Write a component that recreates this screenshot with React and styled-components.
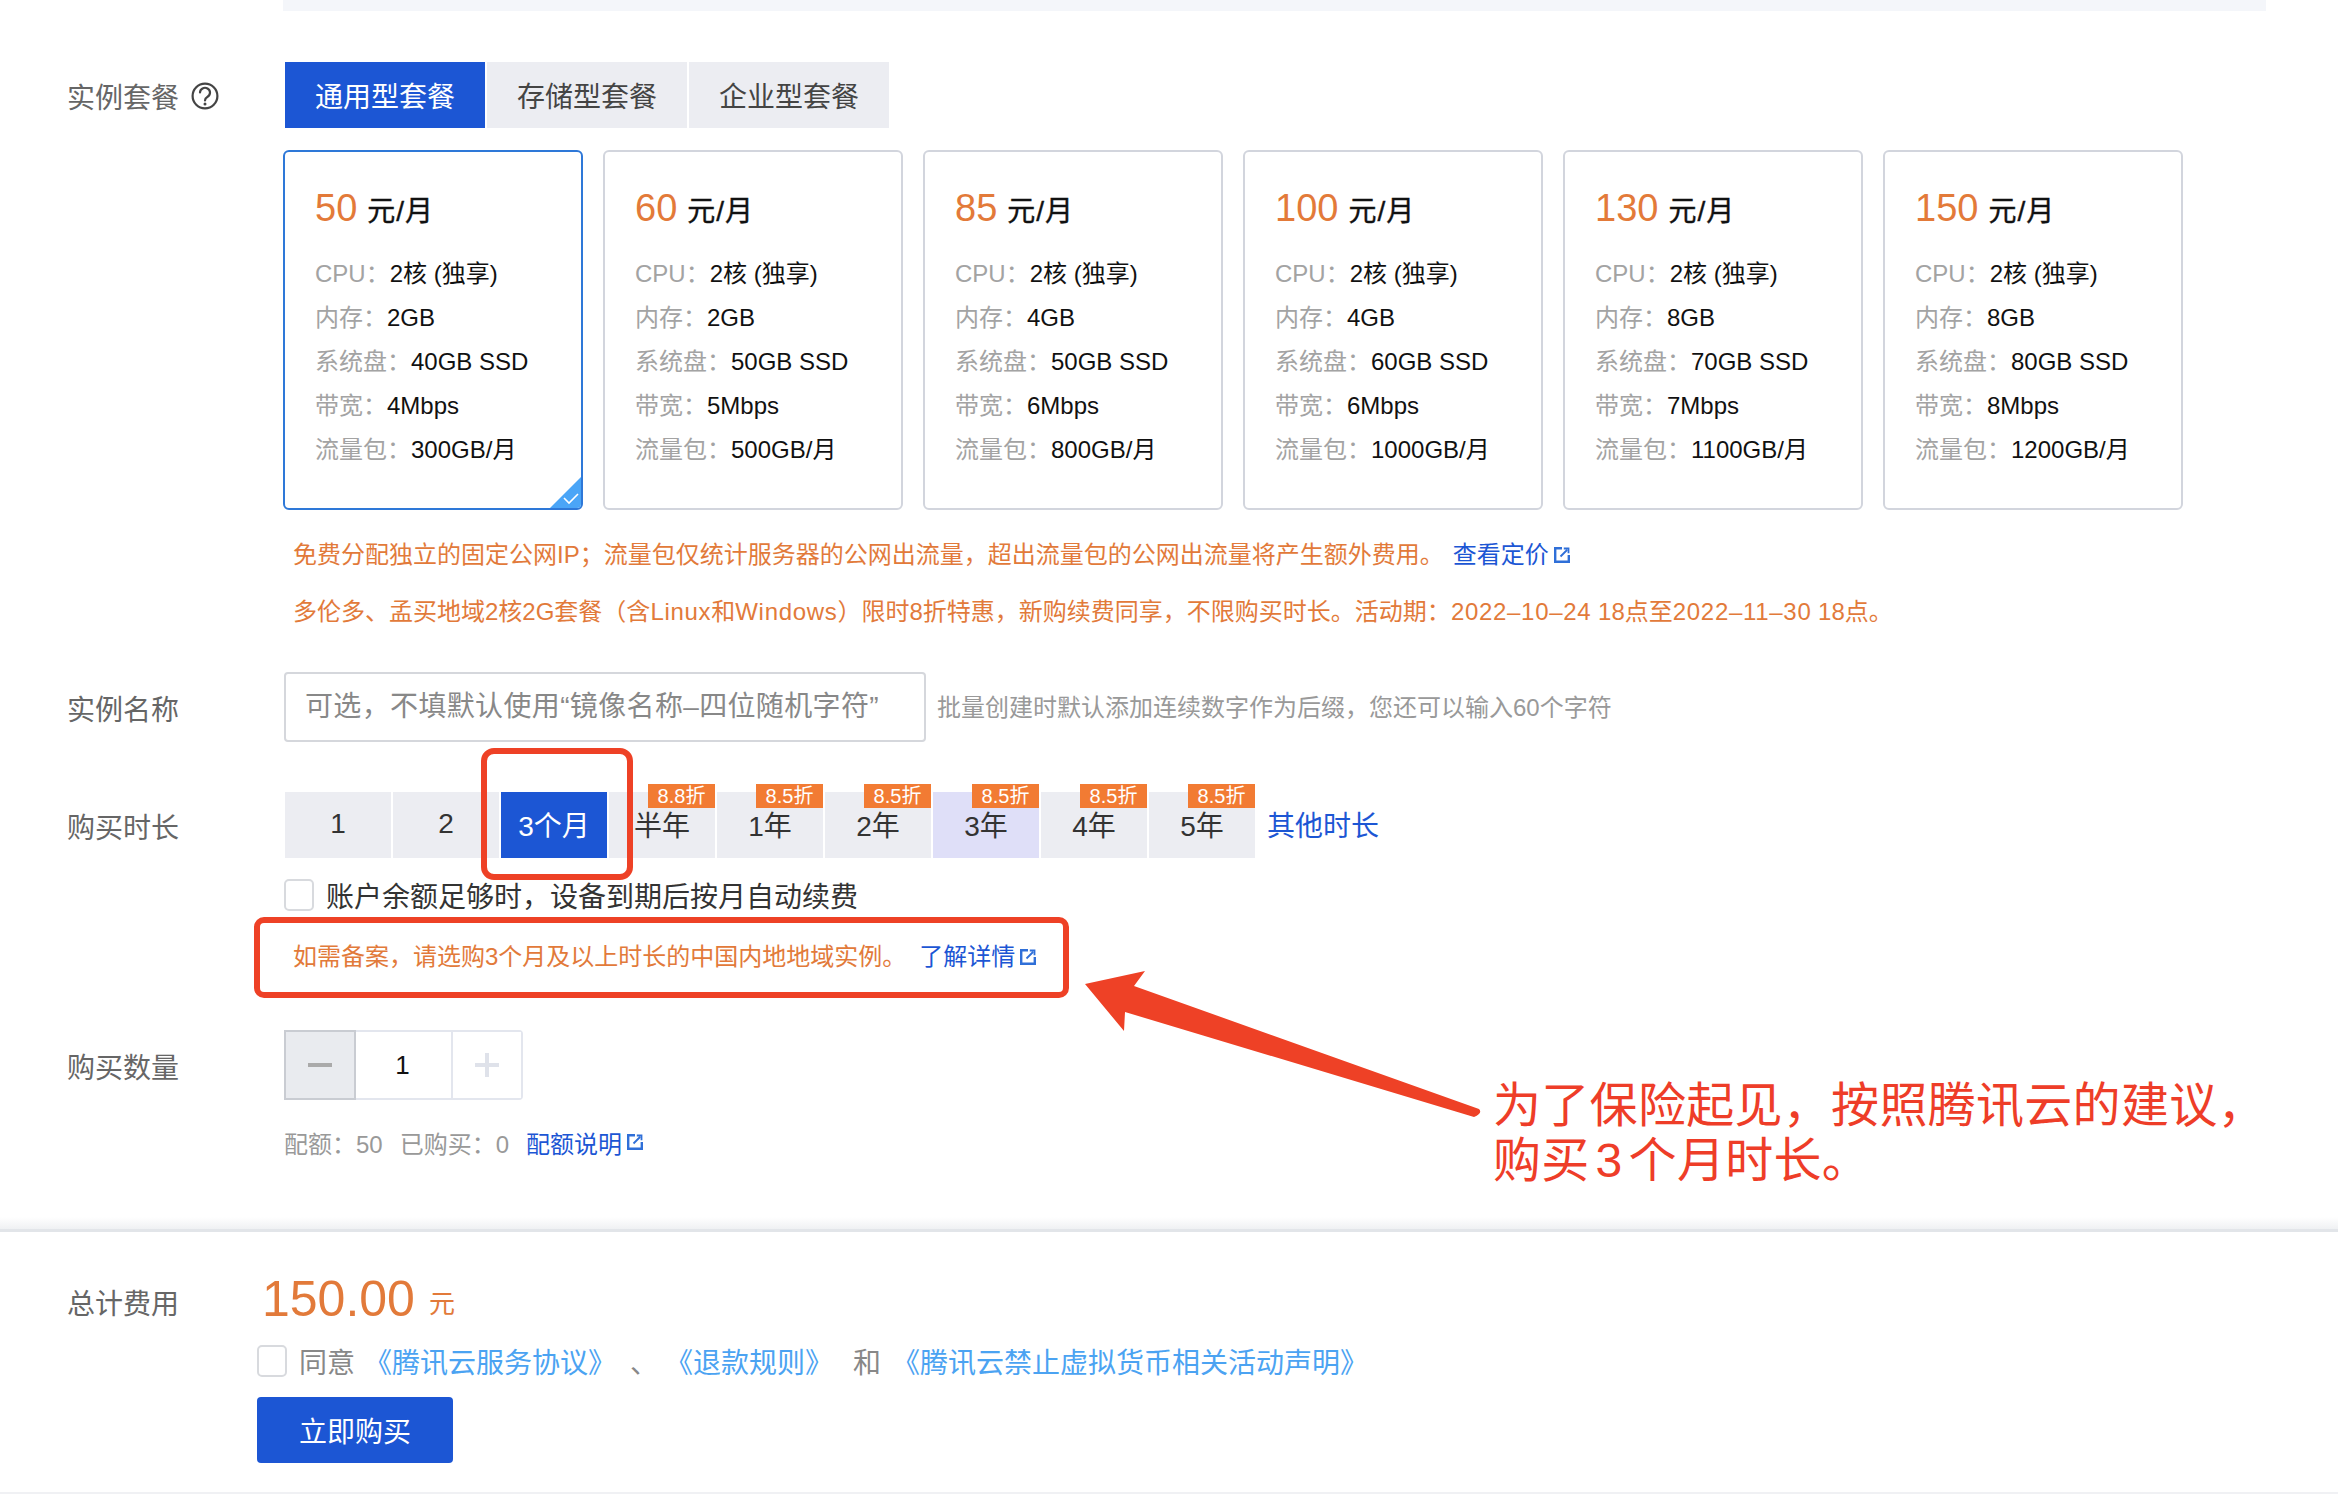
import React from 'react';
import styled, { createGlobalStyle } from 'styled-components';

const GlobalStyle = createGlobalStyle`
  html, body {
    margin: 0;
    padding: 0;
    background: #fff;
  }
  body {
    font-family: "Liberation Sans", "Noto Sans CJK SC", sans-serif;
    color: #333;
  }
`;

const Page = styled.div`
  position: relative;
  width: 2338px;
  height: 1494px;
  overflow: hidden;
  background: #fff;
`;

const TopStrip = styled.div`
  margin-left: 283px;
  width: 1983px;
  height: 11px;
  background: #f4f6fa;
`;

const Main = styled.main`
  display: flex;
  flex-direction: column;
  height: 1229px;
`;

const FormRow = styled.section`
  display: flex;
  margin-top: ${({ $top }) => $top}px;
`;

const Label = styled.div`
  display: flex;
  align-items: center;
  gap: 12px;
  flex: none;
  width: ${({ $width }) => $width || 284}px;
  height: ${({ $height }) => $height || 66}px;
  padding: 1px 0 0 67px;
  box-sizing: border-box;
  font-size: 28px;
  color: #666;
`;

const Content = styled.div`
  display: flex;
  flex-direction: column;
  min-width: 0;
`;

const Tabs = styled.div`
  display: flex;
  gap: 2px;
  margin-left: 1px;
`;

const Tab = styled.div`
  width: 200px;
  height: 66px;
  display: flex;
  align-items: center;
  justify-content: center;
  font-size: 28px;
  color: ${({ $active }) => ($active ? '#fff' : '#444')};
  background: ${({ $active }) => ($active ? '#1c56d4' : '#ecedf2')};
`;

const Cards = styled.div`
  display: flex;
  gap: 20px;
  margin: 22px 0 0 -1px;
`;

const Card = styled.div`
  position: relative;
  box-sizing: border-box;
  width: 300px;
  height: 360px;
  padding: 35px 0 0 30px;
  border: 2px solid ${({ $active }) => ($active ? '#2e78d8' : '#d2d5dd')};
  border-radius: 6px;
  overflow: hidden;
`;

const CardPrice = styled.div`
  display: flex;
  align-items: baseline;
  gap: 10px;
  height: 42px;
  line-height: 42px;
  margin-bottom: 23px;
  font-size: 28px;
  letter-spacing: 1px;
  color: #111;
  -webkit-text-stroke: 0.4px #111;
`;

const PriceNumber = styled.span`
  font-size: 38px;
  letter-spacing: 0;
  color: #e37a39;
  -webkit-text-stroke: 0;
`;

const Spec = styled.div`
  display: flex;
  height: 44px;
  line-height: 44px;
  font-size: 24px;
  color: #111;
`;

const SpecName = styled.span`
  color: #a3a3a3;
`;

const Corner = styled.div`
  position: absolute;
  right: 0;
  bottom: 0;
  width: 0;
  height: 0;
  border-style: solid;
  border-width: 0 0 31px 31px;
  border-color: transparent transparent #4aa5f7 transparent;
`;

const CornerCheck = styled.svg`
  position: absolute;
  right: 2px;
  bottom: 3px;
  width: 16px;
  height: 12px;
`;

const Note = styled.div`
  margin: 0 0 0 9px;
  height: 57px;
  line-height: 57px;
  font-size: 24px;
  color: #e27a3a;
  white-space: nowrap;
`;

const Notes = styled.div`
  margin-top: 16px;
`;

const Latin = styled.span`
  letter-spacing: 0.7px;
`;

const Link = styled.a`
  display: inline-flex;
  align-items: center;
  gap: 5px;
  margin-left: ${({ $left }) => $left || 0}px;
  color: #1c56d4;
`;

const ExternalIcon = () => (
  <svg width="16" height="16" viewBox="0 0 16 16" fill="none" stroke="#2f6fd8" strokeWidth="2.4">
    <path d="M8 1.2H1.2v13.6h13.6V8" />
    <path d="M6.5 9.5l6.5-6.5M9.8 1.5h4.7v4.7" strokeWidth="1.8" />
  </svg>
);

const HelpIcon = () => (
  <svg width="28" height="28" viewBox="0 0 28 28" fill="none" stroke="#444" strokeWidth="2.2">
    <circle cx="14" cy="14" r="12.4" />
    <path d="M9 10.5a5 4.8 0 1 1 7.6 4.2c-1.8 1.1-2.6 2-2.6 3.8" strokeLinecap="round" />
    <circle cx="14" cy="22" r="1.5" fill="#444" stroke="none" />
  </svg>
);

const NameInput = styled.input`
  box-sizing: border-box;
  width: 642px;
  height: 70px;
  padding: 0 19px;
  border: 2px solid #d5d7dc;
  border-radius: 4px;
  outline: none;
  font-family: inherit;
  font-size: 28px;
  letter-spacing: 0.35px;

  &::placeholder {
    color: #888;
    opacity: 1;
  }
`;

const InlineRow = styled.div`
  display: flex;
  align-items: center;
`;

const Hint = styled.span`
  margin: -3px 0 0 11px;
  font-size: 24px;
  color: #999;
  white-space: nowrap;
`;

const Durations = styled.div`
  display: flex;
  align-items: center;
  gap: 2px;
  margin-left: 1px;
`;

const Duration = styled.div`
  position: relative;
  box-sizing: border-box;
  width: 106px;
  height: 66px;
  padding-bottom: 2px;
  display: flex;
  align-items: center;
  justify-content: center;
  font-size: 28px;
  color: ${({ $active }) => ($active ? '#fff' : '#333')};
  background: ${({ $active, $hover }) => ($active ? '#1c56d4' : $hover ? '#dfdff8' : '#ecedf2')};
`;

const Discount = styled.span`
  position: absolute;
  top: -8px;
  right: 0;
  width: 67px;
  height: 24px;
  line-height: 24px;
  text-align: center;
  font-size: 20px;
  color: #fff;
  background: #f27b33;
`;

const Callout = styled.div`
  position: absolute;
  z-index: 2;
  top: -44px;
  left: -20px;
  width: 152px;
  height: 132px;
  box-sizing: border-box;
  border: 6px solid #ee4126;
  border-radius: 13px;
`;

const OtherLink = styled.a`
  margin: 0 0 2px 10px;
  font-size: 28px;
  color: #1c56d4;
`;

const Check = styled.span`
  flex: none;
  box-sizing: border-box;
  width: 30px;
  height: 32px;
  border: 2px solid #d8dade;
  border-radius: 5px;
  background: #fff;
`;

const RenewRow = styled.label`
  display: flex;
  align-items: center;
  gap: 12px;
  height: 32px;
  margin-top: 21px;
  font-size: 28px;
  color: #333;
`;

const FilingNote = styled.div`
  position: relative;
  margin: 28px 0 0 9px;
  height: 36px;
  line-height: 36px;
  font-size: 24px;
  color: #e27a3a;
  white-space: nowrap;
`;

const FilingBox = styled.div`
  position: absolute;
  top: -22px;
  left: -39px;
  width: 815px;
  height: 81px;
  box-sizing: border-box;
  border: 6px solid #ee4126;
  border-radius: 10px;
`;

const Stepper = styled.div`
  display: flex;
  box-sizing: border-box;
  width: 239px;
  height: 70px;
  border: 2px solid #e3e6ee;
  border-radius: 4px;
`;

const StepButton = styled.div`
  flex: none;
  width: ${({ $width }) => $width}px;
  display: flex;
  align-items: center;
  justify-content: center;
  background: ${({ $disabled }) => ($disabled ? '#e9ebef' : '#fff')};
  box-shadow: ${({ $disabled }) => ($disabled ? '0 0 0 2px #c9ccd2' : 'none')};
`;

const StepValue = styled.div`
  flex: 1;
  display: flex;
  align-items: center;
  justify-content: center;
  border-right: 2px solid #e3e6ee;
  font-size: 26px;
  color: #111;
`;

const Quota = styled.div`
  display: flex;
  align-items: center;
  gap: 17px;
  height: 36px;
  margin-top: 24px;
  font-size: 24px;
  color: #999;
`;

const Annotation = styled.div`
  position: absolute;
  left: 1493px;
  top: 1078px;
  font-size: 48px;
  line-height: 55px;
  letter-spacing: 0.3px;
  color: #ee3d28;
  white-space: nowrap;
`;

const AnnotationDigit = styled.span`
  margin: 0 6px;
`;

const Arrow = styled.svg`
  position: absolute;
  left: 0;
  top: 0;
  pointer-events: none;
`;

const Footer = styled.footer`
  position: relative;
  height: 265px;
  box-sizing: border-box;
  padding-top: 40px;
  border-top: 3px solid #e2e5e9;
  border-bottom: 2px solid #f0f1f4;

  &::before {
    content: '';
    position: absolute;
    left: 0;
    right: 0;
    top: -15px;
    height: 12px;
    background: linear-gradient(rgba(226, 229, 233, 0), rgba(226, 229, 233, 0.55));
  }
`;

const FooterBody = styled.div`
  display: flex;
  flex-direction: column;
`;

const Total = styled.div`
  display: flex;
  align-items: center;
  gap: 14px;
  height: 60px;
  margin: -3px 0 0 5px;
  font-size: 26px;
  color: #e27a3a;
`;

const TotalNumber = styled.span`
  font-size: 50px;
  line-height: 60px;
`;

const TotalUnit = styled.span`
  padding-top: 5px;
`;

const Agree = styled.div`
  display: flex;
  align-items: center;
  height: 32px;
  margin-top: 16px;
  font-size: 28px;
  color: #888;
  white-space: nowrap;
`;

const AgreeLink = styled.a`
  margin-left: ${({ $left }) => $left}px;
  color: #4ba3f2;
`;

const AgreeText = styled.span`
  margin-left: ${({ $left }) => $left}px;
`;

const BuyButton = styled.button`
  width: 196px;
  height: 66px;
  margin-top: 20px;
  border: none;
  border-radius: 4px;
  font-family: inherit;
  font-size: 28px;
  color: #fff;
  background: #1c56d4;
`;

const plans = [
  { price: 50, mem: '2GB', disk: '40GB SSD', band: '4Mbps', flow: '300GB/月' },
  { price: 60, mem: '2GB', disk: '50GB SSD', band: '5Mbps', flow: '500GB/月' },
  { price: 85, mem: '4GB', disk: '50GB SSD', band: '6Mbps', flow: '800GB/月' },
  { price: 100, mem: '4GB', disk: '60GB SSD', band: '6Mbps', flow: '1000GB/月' },
  { price: 130, mem: '8GB', disk: '70GB SSD', band: '7Mbps', flow: '1100GB/月' },
  { price: 150, mem: '8GB', disk: '80GB SSD', band: '8Mbps', flow: '1200GB/月' },
];

const durations = [
  { text: '1' },
  { text: '2' },
  { text: '3个月', active: true },
  { text: '半年', off: '8.8折' },
  { text: '1年', off: '8.5折' },
  { text: '2年', off: '8.5折' },
  { text: '3年', off: '8.5折', hover: true },
  { text: '4年', off: '8.5折' },
  { text: '5年', off: '8.5折' },
];

const App = () => {
  return (
    <Page>
      <GlobalStyle />
      <Main>
        <TopStrip />
        <FormRow $top={51}>
          <Label>
            实例套餐
            <HelpIcon />
          </Label>
          <Content>
            <Tabs>
              <Tab $active>通用型套餐</Tab>
              <Tab>存储型套餐</Tab>
              <Tab>企业型套餐</Tab>
            </Tabs>
            <Cards>
              {plans.map((plan, i) => (
                <Card key={plan.price} $active={i === 0}>
                  <CardPrice>
                    <PriceNumber>{plan.price}</PriceNumber>
                    元/月
                  </CardPrice>
                  <Spec><SpecName>CPU：</SpecName>2核 (独享)</Spec>
                  <Spec><SpecName>内存：</SpecName>{plan.mem}</Spec>
                  <Spec><SpecName>系统盘：</SpecName>{plan.disk}</Spec>
                  <Spec><SpecName>带宽：</SpecName>{plan.band}</Spec>
                  <Spec><SpecName>流量包：</SpecName>{plan.flow}</Spec>
                  {i === 0 && (
                    <>
                      <Corner />
                      <CornerCheck viewBox="0 0 16 12" fill="none" stroke="#fff" strokeWidth="1.6">
                        <path d="M1 5l5 5 9-9" />
                      </CornerCheck>
                    </>
                  )}
                </Card>
              ))}
            </Cards>
            <Notes>
              <Note>
                免费分配独立的固定公网IP；流量包仅统计服务器的公网出流量，超出流量包的公网出流量将产生额外费用。
                <Link $left={9}>查看定价<ExternalIcon /></Link>
              </Note>
              <Note>
                多伦多、孟买地域2核2G套餐（含<Latin>Linux</Latin>和<Latin>Windows</Latin>）限时8折特惠，新购续费同享，不限购买时长。活动期：<Latin>2022–10–24</Latin> 18点至<Latin>2022–11–30</Latin> 18点。
              </Note>
            </Notes>
          </Content>
        </FormRow>

        <FormRow $top={32}>
          <Label $height={70}>实例名称</Label>
          <InlineRow>
            <NameInput placeholder="可选，不填默认使用“镜像名称–四位随机字符”" />
            <Hint>批量创建时默认添加连续数字作为后缀，您还可以输入60个字符</Hint>
          </InlineRow>
        </FormRow>

        <FormRow $top={50}>
          <Label>购买时长</Label>
          <Content>
            <Durations>
              {durations.map((item) => (
                <Duration key={item.text} $active={item.active} $hover={item.hover}>
                  {item.text}
                  {item.off && <Discount>{item.off}</Discount>}
                  {item.active && <Callout />}
                </Duration>
              ))}
              <OtherLink>其他时长</OtherLink>
            </Durations>
            <RenewRow>
              <Check />
              账户余额足够时，设备到期后按月自动续费
            </RenewRow>
            <FilingNote>
              <FilingBox />
              如需备案，请选购3个月及以上时长的中国内地地域实例。
              <Link $left={13}>了解详情<ExternalIcon /></Link>
            </FilingNote>
          </Content>
        </FormRow>

        <FormRow $top={55}>
          <Label $height={70}>购买数量</Label>
          <Content>
            <Stepper>
              <StepButton $width={68} $disabled>
                <svg width="24" height="4"><rect width="24" height="4" fill="#aaa" /></svg>
              </StepButton>
              <StepValue>1</StepValue>
              <StepButton $width={68}>
                <svg width="24" height="24"><path d="M12 0v24M0 12h24" stroke="#dfe2ea" strokeWidth="4" /></svg>
              </StepButton>
            </Stepper>
            <Quota>
              <span>配额：50</span>
              <span>已购买：0</span>
              <Link>配额说明<ExternalIcon /></Link>
            </Quota>
          </Content>
        </FormRow>
      </Main>

      <Footer>
        <FormRow $top={0}>
          <Label $width={257} $height={58}>总计费用</Label>
          <FooterBody>
            <Total>
              <TotalNumber>150.00</TotalNumber>
              <TotalUnit>元</TotalUnit>
            </Total>
            <Agree>
              <Check />
              <AgreeText $left={12}>同意</AgreeText>
              <AgreeLink $left={9}>《腾讯云服务协议》</AgreeLink>
              <AgreeText $left={14}>、</AgreeText>
              <AgreeLink $left={7}>《退款规则》</AgreeLink>
              <AgreeText $left={20}>和</AgreeText>
              <AgreeLink $left={11}>《腾讯云禁止虚拟货币相关活动声明》</AgreeLink>
            </Agree>
            <BuyButton>立即购买</BuyButton>
          </FooterBody>
        </FormRow>
      </Footer>

      <Arrow width="2338" height="1494" viewBox="0 0 2338 1494">
        <path
          d="M1085 984L1145 971L1134 986L1479 1109Q1483 1113 1474 1117L1125 1012L1124 1031Z"
          fill="#ee4126"
        />
      </Arrow>
      <Annotation>
        为了保险起见，按照腾讯云的建议，
        <br />
        购买<AnnotationDigit>3</AnnotationDigit>个月时长。
      </Annotation>
    </Page>
  );
};

export default App;
